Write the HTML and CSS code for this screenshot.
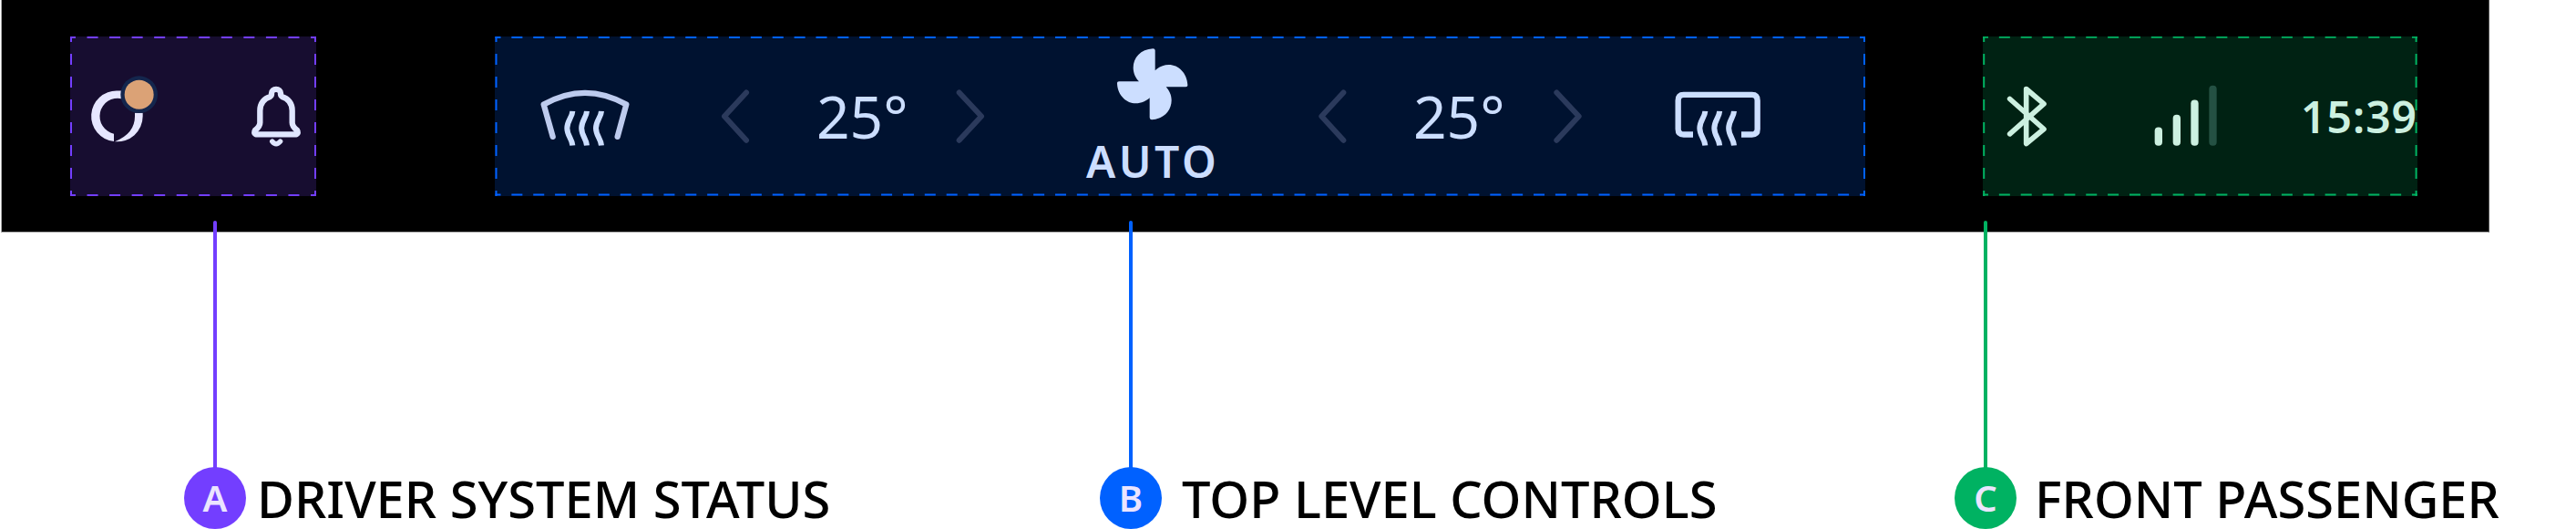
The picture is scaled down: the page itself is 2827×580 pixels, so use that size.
FILE: index.html
```html
<!DOCTYPE html>
<html lang="en">
<head>
<meta charset="utf-8">
<title>System bar anatomy</title>
<link rel="stylesheet" href="styles.css">
</head>
<body>
<header class="bar">
  <section class="zone zone-driver">
    <svg class="outline" viewBox="0 0 270 175">
      <path stroke-dasharray="12 12.545" d="M0 1H270M0 174H270"/>
      <path stroke-dasharray="12 13" d="M1 0V175M269 0V175"/>
    </svg>
    <svg class="icon profile" viewBox="291 232.5 240 300">
      <path d="M386 297A83.5 83.5 0 0 0 375 463.5V438.5A58 58 0 0 1 400 323V297Z"/>
      <path d="M470 370V381A83.5 83.5 0 0 1 378 464Q444 438 444 381V370Z"/>
      <circle class="dot-ring" cx="458" cy="309.5" r="61"/>
      <circle class="dot" cx="458" cy="309.5" r="48"/>
    </svg>
    <svg class="icon bell" viewBox="820 262.5 180 240">
      <path stroke-width="19" d="M843 440.5Q835 436 841 427C850 420 857 413 857 402V362C857 338 872 322 889 317Q896 313 895 305A15 13 0 0 1 925 305Q924 313 931 317C948 322 963 338 963 362V402C963 413 970 420 979 427Q985 436 977 440.5Z"/>
      <path stroke-width="16" d="M897 463.500Q910 480 924 463.500"/>
    </svg>
  </section>

  <section class="zone zone-climate">
    <svg class="outline" viewBox="0 0 1504 175">
      <path stroke-dasharray="12 11.865" d="M.5 1H1504M.5 173.500H1504"/>
      <path stroke-dasharray="12 13" d="M1.500 0V175M1503 0V175"/>
    </svg>
    <svg class="icon front-defrost" viewBox="186 202.500 300 240">
      <path class="glass" d="M230 388L200 282Q336 206 472 282L443 388"/>
      <path class="heat" d="M295 304C294 325 277 335 277 360S294 395 295 417M342 304C341 325 324.500 335 324.500 360S341 395 342 417M390 304C389 325 372 335 372 360S389 395 390 417"/>
    </svg>
    <svg class="icon chevron left-a" viewBox="783 202.500 96 240"><path d="M867 243L795 321L867 400"/></svg>
    <span class="temp temp-a">25°</span>
    <svg class="icon chevron right-a" viewBox="327 202.500 96 240"><path d="M338 243L411 321L338 400"/></svg>
    <div class="fan">
      <svg class="fan-icon" viewBox="855 99 240 240">
        <path d="M983 172V106Q983 100 976 100C935 102 911 130 911 163C911 182 920 198 930 208H864Q857 208 858 215C860 255 890 280 919 280C938 280 955 272 965 262V327Q966 334 972 334C1010 331 1037 305 1037 270C1037 252 1029 237 1019 226H1084Q1091 226 1090 219C1088 180 1060 153 1028 153C1010 153 994 161 983 172Z"/>
      </svg>
      <span class="fan-mode">AUTO</span>
    </div>
    <svg class="icon chevron left-b" viewBox="782 202.500 96 240"><path d="M867 243L795 321L867 400"/></svg>
    <span class="temp temp-b">25°</span>
    <svg class="icon chevron right-b" viewBox="328 202.500 96 240"><path d="M338 243L411 321L338 400"/></svg>
    <svg class="icon rear-defrost" viewBox="285 202.500 300 240">
      <path class="frame" d="M354 381H323Q305 381 305 363V269Q305 250 323 250H548Q566 250 566 269V363Q566 381 548 381H513"/>
      <path class="heat" d="M394 304C393 325 376 335 376 360S393 395 394 417M441.500 304C440.500 325 424 335 424 360S440.500 395 441.500 417M489 304C488 325 471.500 335 471.500 360S488 395 489 417"/>
    </svg>
  </section>

  <section class="zone zone-passenger">
    <svg class="outline" viewBox="0 0 477 175">
      <path stroke-dasharray="12 11.850" d="M0 .8H477M0 173.500H477"/>
      <path stroke-dasharray="12 13" d="M1.200 0V175M475.600 0V175"/>
    </svg>
    <svg class="icon bluetooth" viewBox="150 202.500 150 240"><path d="M167 264L279 363L221 411V231L279 280L167 379"/></svg>
    <svg class="icon signal" viewBox="636 202.500 225 240">
      <rect x="644" y="357" width="25" height="61" rx="12"/>
      <rect x="704" y="316" width="25" height="102" rx="12"/>
      <rect x="763" y="267" width="25" height="151" rx="12"/>
      <rect class="off" x="823" y="220" width="25" height="198" rx="12"/>
    </svg>
    <span class="clock">15:39</span>
  </section>
</header>

<main class="legend">
  <div class="callout callout-a"><i class="stem"></i><div class="row"><b class="badge">A</b><span class="label">DRIVER SYSTEM STATUS</span></div></div>
  <div class="callout callout-b"><i class="stem"></i><div class="row"><b class="badge">B</b><span class="label">TOP LEVEL CONTROLS</span></div></div>
  <div class="callout callout-c"><i class="stem"></i><div class="row"><b class="badge">C</b><span class="label">FRONT PASSENGER</span></div></div>
</main>
</body>
</html>
```
FILE: styles.css
```css
* { box-sizing: border-box; }
body {
  margin: 0;
  width: 2827px;
  height: 580px;
  overflow: hidden;
  background: #fff;
  font-family: "Noto Sans", sans-serif;
}
svg { display: block; flex: none; }

.bar {
  display: flex;
  width: 2731px;
  height: 255px;
  margin-left: 1px;
  padding: 40px 0 0 75px;
  background: #000;
  border: solid #aaa;
  border-width: 0 1px 1px;
  border-right-color: #555;
}
.zone {
  position: relative;
  display: flex;
  flex: none;
  align-items: center;
  height: 175px;
}
.outline {
  position: absolute;
  inset: 0;
  width: 100%;
  height: 100%;
  fill: none;
  stroke-width: 2;
  stroke-dashoffset: 6;
}
.icon { height: 80px; fill: none; stroke-linecap: round; stroke-linejoin: round; }

.zone-driver { width: 270px; background: #170d30; }
.zone-driver .outline { stroke: #733eff; }
.profile { width: 80px; height: 100px; margin-left: 20px; fill: #e6e6ff; }
.dot-ring { fill: #14264d; }
.dot { fill: #dba276; }
.bell { width: 60px; margin-left: 96px; stroke: #e0e6ff; }

.zone-climate { width: 1504px; margin-left: 196px; background: #001230; color: #ccdeff; }
.zone-climate .outline { stroke: #0061ff; }
.front-defrost { width: 100px; margin-left: 49px; }
.glass { stroke: #bdcbee; stroke-width: 19; }
.heat { stroke: #ccdeff; stroke-width: 18; stroke-linecap: butt; }
.chevron { width: 32px; stroke: #2b3a5c; stroke-width: 18; }
.left-a { margin-left: 99px; }
.temp { width: 101px; font-size: 64px; line-height: 80px; white-space: nowrap; }
.temp-a { margin-left: 73px; }
.right-a { margin-left: 52px; }
.fan {
  display: flex;
  flex-direction: column;
  width: 150px;
  height: 175px;
  margin-left: 109px;
  padding-top: 13px;
}
.fan-icon { width: 80px; height: 80px; margin-left: 35px; fill: #ccdeff; }
.fan-mode {
  margin-top: 14px;
  margin-left: 2px;
  font-size: 48px;
  font-weight: 600;
  line-height: 60px;
  letter-spacing: 3.5px;
}
.left-b { margin-left: 106px; }
.temp-b { margin-left: 73px; }
.right-b { margin-left: 53px; }
.rear-defrost { width: 100px; margin-left: 98px; }
.frame { stroke: #ccdeff; stroke-width: 19; stroke-linecap: butt; }

.zone-passenger { width: 477px; margin-left: 129px; background: #002213; color: #ccf0e0; }
.zone-passenger .outline { stroke: #00b262; }
.bluetooth { width: 50px; margin-left: 24px; stroke: #ccf0e0; stroke-width: 17; }
.signal { width: 75px; margin-left: 112px; fill: #ccf0e0; }
.off { fill: #245143; }
.clock {
  margin-left: 88px;
  font-size: 48px;
  font-weight: 600;
  line-height: 60px;
  letter-spacing: 1px;
  white-space: nowrap;
}

.legend {
  display: grid;
  grid-template-columns: 1005px 938px 1fr;
  height: 338px;
  margin-top: -13px;
  padding-left: 202px;
}
.callout { position: relative; white-space: nowrap; }
.callout-a { --accent: #733eff; --gap: 12px; }
.callout-b { --accent: #0061ff; --gap: 22px; }
.callout-c { --accent: #00b262; --gap: 20px; }
.stem {
  display: block;
  width: 4px;
  height: 272px;
  margin-left: 32px;
  background: var(--accent);
  border-radius: 2px 2px 0 0;
}
.row { display: flex; gap: var(--gap); margin-top: -2px; }
.badge {
  flex: none;
  width: 68px;
  height: 68px;
  border-radius: 50%;
  background: var(--accent);
  color: #ebe5ff;
  font-size: 40px;
  font-weight: 600;
  line-height: 68px;
  text-align: center;
}
.label { color: #000; font-size: 56px; font-weight: 500; line-height: 68px; }
```
